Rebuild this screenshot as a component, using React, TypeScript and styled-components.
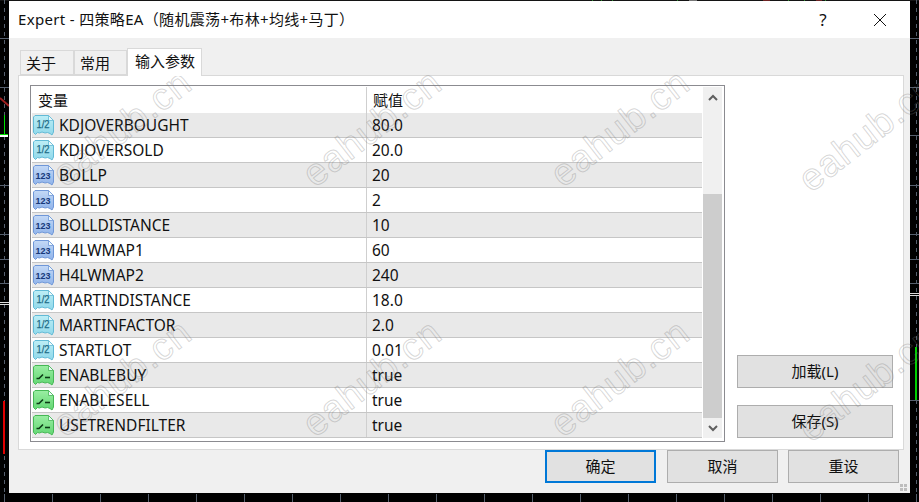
import React from "react";
import styled, { createGlobalStyle } from "styled-components";

const Global = createGlobalStyle`
  html, body { margin: 0; padding: 0; background: #000; }
  body { width: 919px; height: 502px; overflow: hidden; }
  * { box-sizing: border-box; }
`;

const FONT = `"Noto Sans", "Noto Sans CJK SC", sans-serif`;

const Screen = styled.div`
  position: relative;
  width: 919px;
  height: 502px;
  padding: 1px 9px 9px;
  background: #000;
  font-family: ${FONT};
  color: #111;
  overflow: hidden;
`;
const Backdrop = styled.svg`
  position: absolute;
  inset: 0;
`;
const Dialog = styled.div`
  position: relative;
  display: flex;
  flex-direction: column;
  height: 492px;
  background: #f0f0f0;
`;
const TitleBar = styled.div`
  display: flex;
  align-items: center;
  height: 37px;
  padding-left: 9px;
  background: #fff;
  font-size: 15px;
`;
const TitleText = styled.span`
  flex: 1;
  white-space: pre;
  line-height: 37px;
  letter-spacing: 0.33px;
`;
const Help = styled.span`
  width: 14px;
  margin-right: 43px;
  text-align: center;
  font-size: 17px;
  line-height: 20px;
`;
const Close = styled.svg`
  width: 14px;
  height: 14px;
  margin-right: 23px;
`;
const TabRow = styled.div`
  position: relative;
  z-index: 1;
  display: flex;
  align-items: flex-end;
  height: 38px;
  margin-bottom: -1px;
  padding-left: 11px;
`;
const Tab = styled.div<{ $active?: boolean; $w: number }>`
  width: ${(p) => p.$w}px;
  height: ${(p) => (p.$active ? 28 : 25)}px;
  margin-bottom: ${(p) => (p.$active ? 0 : 1)}px;
  padding: 1px 0 0 ${(p) => (p.$active ? 7 : 5)}px;
  font-size: 15px;
  line-height: 22px;
  background: ${(p) => (p.$active ? "#fff" : "#f0f0f0")};
  border: 1px solid #d9d9d9;
  border-bottom: ${(p) => (p.$active ? "none" : "1px solid #d9d9d9")};
`;
const Panel = styled.div`
  display: flex;
  gap: 12px;
  height: 375px;
  margin: 0 6px 0 9px;
  padding: 9px 10px 7px 11px;
  background: #fff;
  border: 1px solid #d9d9d9;
`;
const List = styled.div`
  display: flex;
  width: 695px;
  height: 357px;
  background: #fff;
  border: 1px solid #8b8b90;
  padding: 1px 1px 3px 1px;
`;
const Grid = styled.div`
  flex: 1;
  display: flex;
  flex-direction: column;
`;
const HeaderRow = styled.div`
  display: flex;
  height: 26px;
  font-size: 15px;
  line-height: 27px;
`;
const HeadVar = styled.div`
  width: 334px;
  padding-left: 6px;
`;
const HeadVal = styled.div`
  flex: 1;
  padding-left: 6px;
  border-left: 1px solid #cfcfcf;
`;
const Row = styled.div<{ $odd: boolean }>`
  display: flex;
  height: 25px;
  background: ${(p) => (p.$odd ? "#e9e9e9" : "#fff")};
  border-bottom: 1px solid #c6c6c6;
  font-size: 15.5px;
  line-height: 24px;
`;
const VarCell = styled.div`
  display: flex;
  align-items: center;
  gap: 5px;
  width: 334px;
  padding-left: 1px;
`;
const ValCell = styled.div`
  flex: 1;
  padding-left: 5px;
  border-left: 1px solid #cfcfcf;
`;
const Scrollbar = styled.div`
  display: flex;
  flex-direction: column;
  width: 19px;
  margin-left: 1px;
  margin-right: 1px;
  background: #f0f0f0;
`;
const ArrowBox = styled.div`
  display: flex;
  align-items: center;
  justify-content: center;
  height: 20px;
`;
const TrackSpace = styled.div`
  height: 87px;
`;
const Thumb = styled.div`
  flex: 1;
  background: #cdcdcd;
`;
const SideCol = styled.div`
  display: flex;
  flex-direction: column;
  justify-content: flex-end;
  gap: 17px;
  width: 156px;
  padding-bottom: 4px;
`;
const Btn = styled.div<{ $w?: number; $primary?: boolean }>`
  width: ${(p) => (p.$w ? `${p.$w}px` : "100%")};
  height: 33px;
  text-align: center;
  font-size: 15px;
  line-height: ${(p) => (p.$primary ? 29 : 31)}px;
  background: #e1e1e1;
  border: ${(p) => (p.$primary ? "2px solid #0078d7" : "1px solid #adadad")};
`;
const Footer = styled.div`
  display: flex;
  justify-content: flex-end;
  gap: 10px;
  padding-right: 11px;
  & > :first-child {
    margin-right: 1px;
  }
`;
const Grip = styled.svg`
  position: absolute;
  right: 3px;
  bottom: 2px;
`;
const Marks = styled.div`
  position: absolute;
  inset: 0;
  pointer-events: none;
  overflow: hidden;
`;
const Mark = styled.span<{ $x: number; $y: number }>`
  position: absolute;
  left: ${(p) => p.$x}px;
  top: ${(p) => p.$y}px;
  transform: translate(-50%, -50%) rotate(-38deg);
  font-family: "Liberation Sans", sans-serif;
  font-size: 38px;
  letter-spacing: 1px;
  white-space: nowrap;
  color: transparent;
  -webkit-text-stroke: 1px rgba(120, 120, 120, 0.3);
`;

type Kind = "half" | "int" | "bool";

const palette = {
  half: { top: "#bdeef6", fill: "#8fd8ea", edge: "#62bad6", ink: "#1c6a86" },
  int: { top: "#c4d9f6", fill: "#8fb3ea", edge: "#6f97d8", ink: "#17397a" },
  bool: { top: "#9aeea3", fill: "#62d672", edge: "#46b856", ink: "#0c3a16" },
};

const ParamIcon = ({ kind }: { kind: Kind }) => {
  const c = palette[kind];
  const id = `g-${kind}`;
  return (
    <svg width="21" height="21" viewBox="0 0 21 21" style={{ flex: "none" }}>
      <defs>
        <linearGradient id={id} x1="0" y1="0" x2="0" y2="1">
          <stop offset="0" stopColor={c.top} />
          <stop offset="1" stopColor={c.fill} />
        </linearGradient>
      </defs>
      <path
        d="M2 0.5H15.5L20.5 5.5V17L19 20L17 18.5L14.5 17.5L12 18L9 17L6.5 18L4.5 17.5L2.5 19.5L0.5 17.5V2Z"
        fill={`url(#${id})`}
        stroke={c.edge}
      />
      <path d="M15.5 0.5V5.5H20.5Z" fill="#eef9fc" stroke={c.edge} strokeWidth="0.8" />
      {kind === "half" && (
        <text x="3.5" y="13" fontSize="11" fontFamily="Liberation Sans" fill={c.ink} stroke={c.ink} strokeWidth="0.25" textLength="13" lengthAdjust="spacingAndGlyphs">
          1/2
        </text>
      )}
      {kind === "int" && (
        <text x="2.5" y="13.5" fontSize="8.5" fontWeight="700" fontFamily="Liberation Sans" fill={c.ink} textLength="15" lengthAdjust="spacingAndGlyphs">
          123
        </text>
      )}
      {kind === "bool" && (
        <g fill="none" stroke={c.ink} strokeWidth="1.6">
          <path d="M3.5 13.5H6L10 9.5" />
          <path d="M12 12.5H17" />
        </g>
      )}
    </svg>
  );
};

const rows: [Kind, string, string][] = [
  ["half", "KDJOVERBOUGHT", "80.0"],
  ["half", "KDJOVERSOLD", "20.0"],
  ["int", "BOLLP", "20"],
  ["int", "BOLLD", "2"],
  ["int", "BOLLDISTANCE", "10"],
  ["int", "H4LWMAP1", "60"],
  ["int", "H4LWMAP2", "240"],
  ["half", "MARTINDISTANCE", "18.0"],
  ["half", "MARTINFACTOR", "2.0"],
  ["half", "STARTLOT", "0.01"],
  ["bool", "ENABLEBUY", "true"],
  ["bool", "ENABLESELL", "true"],
  ["bool", "USETRENDFILTER", "true"],
];

const marks: [number, number][] = [
  [122, 128], [372, 128], [620, 128], [868, 133],
  [122, 378], [372, 378], [620, 378], [868, 383],
];

const tickYs = [38, 87, 185, 234, 259, 283];
const topMarks: [number, string][] = [
  [592, "#2a8a2a"], [601, "#2a8a2a"], [612, "#2a8a2a"], [677, "#2a8a2a"], [788, "#2a8a2a"], [804, "#2a8a2a"], [825, "#2a8a2a"],
];

const Chart = () => (
  <Backdrop width="919" height="502" viewBox="0 0 919 502">
    <rect x="0" y="0" width="919" height="1" fill="#141414" />
    {topMarks.map(([x, c]) => (
      <rect key={x} x={x} y="0" width="1" height="1" fill={c} />
    ))}
    <rect x="689" y="0" width="8" height="1" fill="#777" />
    <rect x="763" y="0" width="7" height="1" fill="#6e2424" />
    <rect x="816" y="0" width="6" height="1" fill="#6e2424" />
    <path d="M4.5 0V502" stroke="#56606e" strokeDasharray="4 4" />
    <path d="M916.5 0V502" stroke="#56606e" strokeDasharray="4 4" />
    {tickYs.map((y) => (
      <g key={y}>
        <rect x="0" y={y} width="9" height="1" fill="#56606e" />
        <rect x="910" y={y} width="9" height="1" fill="#56606e" />
      </g>
    ))}
    <rect x="910" y="135" width="9" height="1" fill="#56606e" />
    <rect x="910" y="400" width="9" height="1" fill="#56606e" />
    <path d="M0 98L9 106" stroke="#a02020" strokeWidth="2" />
    <rect x="4" y="115" width="1" height="20" fill="#00e000" />
    <rect x="0" y="134" width="8" height="1" fill="#00e000" />
    <rect x="0" y="135" width="8" height="2" fill="#fff" />
    <rect x="0" y="302" width="9" height="1" fill="#ddd" />
    <rect x="0" y="304" width="9" height="1" fill="#ddd" />
    <rect x="910" y="293" width="9" height="1" fill="#ddd" />
    <rect x="910" y="295" width="9" height="1" fill="#ddd" />
    <rect x="3" y="401" width="2" height="53" fill="#e00000" />
    <rect x="915" y="347" width="2" height="53" fill="#00d000" />
    {Array.from({ length: 20 }, (_, i) => (
      <rect key={i} x={4 + i * 48} y="494" width="1" height="8" fill="#56606e" />
    ))}
  </Backdrop>
);

export default function App() {
  return (
    <Screen>
      <Global />
      <Chart />
      <Dialog>
        <TitleBar>
          <TitleText>Expert - 四策略EA（随机震荡+布林+均线+马丁）</TitleText>
          <Help>?</Help>
          <Close viewBox="0 0 14 14">
            <path d="M1 1L13 13M13 1L1 13" stroke="#111" strokeWidth="1" fill="none" />
          </Close>
        </TitleBar>
        <TabRow>
          <Tab $w={54}>关于</Tab>
          <Tab $w={53}>常用</Tab>
          <Tab $w={75} $active>输入参数</Tab>
        </TabRow>
        <Panel>
          <List>
            <Grid>
              <HeaderRow>
                <HeadVar>变量</HeadVar>
                <HeadVal>赋值</HeadVal>
              </HeaderRow>
              {rows.map(([kind, name, value], i) => (
                <Row key={name} $odd={i % 2 === 0}>
                  <VarCell>
                    <ParamIcon kind={kind} />
                    {name}
                  </VarCell>
                  <ValCell>{value}</ValCell>
                </Row>
              ))}
            </Grid>
            <Scrollbar>
              <ArrowBox>
                <svg width="10" height="7" viewBox="0 0 10 7">
                  <path d="M1 6L5 2L9 6" fill="none" stroke="#5f5f5f" strokeWidth="2" />
                </svg>
              </ArrowBox>
              <TrackSpace />
              <Thumb />
              <ArrowBox>
                <svg width="10" height="7" viewBox="0 0 10 7">
                  <path d="M1 1L5 5L9 1" fill="none" stroke="#5f5f5f" strokeWidth="2" />
                </svg>
              </ArrowBox>
            </Scrollbar>
          </List>
          <SideCol>
            <Btn>加载(L)</Btn>
            <Btn>保存(S)</Btn>
          </SideCol>
        </Panel>
        <Footer>
          <Btn $w={111} $primary>确定</Btn>
          <Btn $w={111}>取消</Btn>
          <Btn $w={111}>重设</Btn>
        </Footer>
        <Grip width="7" height="7" viewBox="0 0 7 7">
          <path d="M0 0h3v3H0zM4 0h3v3H4zM0 4h3v3H0zM4 4h3v3H4z" fill="#bdbdbd" />
        </Grip>
      </Dialog>
      <Marks>
        {marks.map(([x, y]) => (
          <Mark key={`${x}-${y}`} $x={x} $y={y}>eahub.cn</Mark>
        ))}
      </Marks>
    </Screen>
  );
}
